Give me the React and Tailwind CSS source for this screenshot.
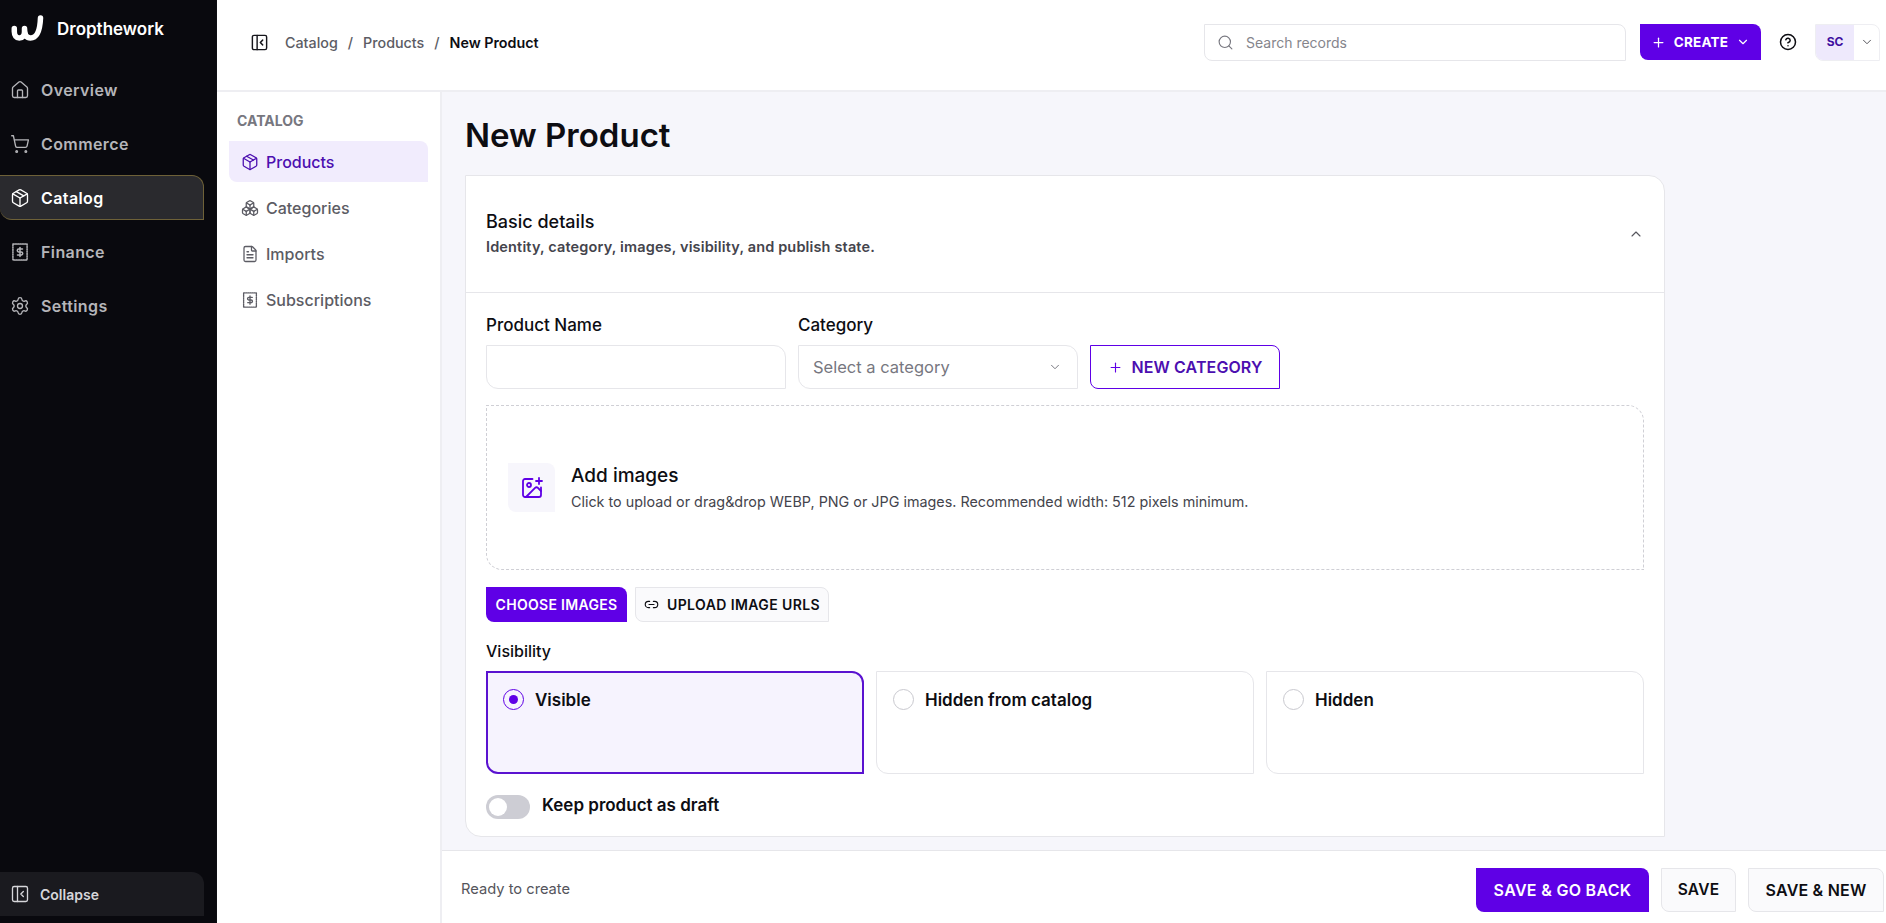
// App.jsx - New Product screen
import {
  House,
  ShoppingCart,
  Package,
  Settings,
  Boxes,
  FileText,
  PanelLeftClose,
  Search,
  Plus,
  ChevronDown,
  ChevronUp,
  CircleHelp,
  ImagePlus,
  Link2,
} from "lucide-react";

function ReceiptDollar({ className }) {
  return (
    <svg viewBox="0 0 24 24" fill="none" stroke="currentColor" strokeWidth="1.8" strokeLinecap="round" strokeLinejoin="round" className={className}>
      <path d="M3.500 2.500h17v19h-17z" strokeDasharray="1.6 1.2" />
      <path d="M15 8.500h-4.500a1.750 1.750 0 0 0 0 3.500h3a1.750 1.750 0 0 1 0 3.500H9" />
      <path d="M12 6.500v11" />
    </svg>
  );
}

function Logo() {
  return (
    <svg viewBox="0 0 32 26" className="w-[33px] h-[26px]" fill="none" stroke="#fff" strokeWidth="5.500" strokeLinecap="round" strokeLinejoin="round">
      <path d="M2.800 13.500v3c0 4 2 6.500 5 6.500 3.400 0 5.200-2.600 5.200-6.500v-3c0 6 1.600 9.500 6 9.500 6 0 9.500-7.500 10-20" />
    </svg>
  );
}

const mainNav = [
  { label: "Overview", icon: House },
  { label: "Commerce", icon: ShoppingCart },
  { label: "Catalog", icon: Package, active: true },
  { label: "Finance", icon: ReceiptDollar },
  { label: "Settings", icon: Settings },
];

const subNav = [
  { label: "Products", icon: Package, active: true },
  { label: "Categories", icon: Boxes },
  { label: "Imports", icon: FileText },
  { label: "Subscriptions", icon: ReceiptDollar },
];

function VisibilityCard({ label, checked }) {
  return (
    <div
      className={
        checked
          ? "flex-1 h-[103px] pl-[15px] pr-[16px] pt-[16px] flex items-start gap-[11px] bg-[#f6f3fe] border-2 border-[#5a12d0] rounded-tr-xl rounded-bl-xl"
          : "flex-1 h-[103px] pl-[16px] pr-[17px] pt-[17px] flex items-start gap-[11px] bg-white border border-[#e6e6ea] rounded-tr-xl rounded-bl-xl"
      }
    >
      <span
        className={
          checked
            ? "w-[21px] h-[21px] rounded-full border border-[#5f00e6] flex items-center justify-center shrink-0"
            : "w-[21px] h-[21px] rounded-full border border-[#c9c9cf] shrink-0"
        }
      >
        {checked && <span className="w-[9px] h-[9px] rounded-full bg-[#5f00e6]" />}
      </span>
      <span className="text-[17px] leading-[22px] font-semibold text-[#0d0d12]">{label}</span>
    </div>
  );
}

export default function App() {
  return (
    <div className="h-screen flex overflow-hidden bg-white text-[#0d0d12] font-['Inter',sans-serif]">
      {/* main sidebar */}
      <aside className="w-[217px] shrink-0 bg-[#09090e] flex flex-col border-r border-[#0d0d12]">
        <div className="h-[58px] pl-[11px] pt-[15px] flex items-start gap-[13px]">
          <Logo />
          <span className="text-white text-[17px] leading-[28px] font-semibold">Dropthework</span>
        </div>
        <nav className="mt-[9px] pr-[12px] flex flex-col gap-[9px]">
          {mainNav.map((item) => (
            <div
              key={item.label}
              className={
                item.active
                  ? "h-[45px] pl-[10px] flex items-center gap-[11px] bg-[#2a2a2e] border border-l-0 border-[#6e6138] rounded-tr-xl rounded-bl-xl text-white"
                  : "h-[45px] pl-[10px] flex items-center gap-[11px] text-[#b5b5b9]"
              }
            >
              <item.icon className="w-[20px] h-[20px]" strokeWidth={1.6} />
              <span className="text-[16px] font-semibold tracking-[0.4px]">{item.label}</span>
            </div>
          ))}
        </nav>
        <div className="mt-auto mb-[7px] mr-[12px] h-[44px] pl-[10px] flex items-center gap-[10px] bg-[#1a1a1f] rounded-tr-xl text-[#d6d6da]">
          <PanelLeftClose className="w-[20px] h-[20px]" strokeWidth={1.6} />
          <span className="text-[14px] pt-[1px] font-semibold">Collapse</span>
        </div>
      </aside>

      <div className="flex-1 min-w-0 flex flex-col">
        {/* top bar */}
        <header className="h-[92px] shrink-0 flex items-center pl-[33px] pr-[6px] pb-[6px] border-b-2 border-[#eeeef2]">
          <PanelLeftClose className="w-[19px] h-[19px] text-[#16161c]" strokeWidth={1.8} />
          <div className="ml-[16px] pt-[1px] flex items-center gap-[10px] text-[14.300px] font-medium text-[#5c5c64]">
            <span>Catalog</span>
            <span>/</span>
            <span>Products</span>
            <span>/</span>
            <span className="font-semibold text-[#0d0d12]">New Product</span>
          </div>
          <div className="ml-auto w-[422px] h-[37px] pl-[12px] flex items-center gap-[12px] border border-[#e6e6ea] rounded-tr-lg rounded-bl-lg">
            <Search className="w-[17px] h-[17px] text-[#77777f]" strokeWidth={1.6} />
            <span className="text-[14px] text-[#85858c]">Search records</span>
          </div>
          <button className="ml-[14px] w-[121px] h-[36px] flex items-center justify-center gap-[8px] bg-[#5f00e6] text-white text-[13.500px] font-bold tracking-[0.2px] rounded-tr-lg rounded-bl-lg">
            <Plus className="w-[15px] h-[15px]" strokeWidth={2} />
            CREATE
            <ChevronDown className="w-[14px] h-[14px]" strokeWidth={2} />
          </button>
          <CircleHelp className="ml-[18px] w-[18px] h-[18px] text-[#0d0d12]" strokeWidth={2} />
          <div className="ml-[18px] w-[65px] h-[37px] flex border border-[#eeeef2] rounded-tr-lg rounded-bl-lg overflow-hidden">
            <span className="w-[38px] flex items-center justify-center bg-[#eee9fc] text-[#3f10a0] text-[12px] font-bold">SC</span>
            <span className="flex-1 flex items-center justify-center text-[#55555c]">
              <ChevronDown className="w-[14px] h-[14px]" strokeWidth={1.7} />
            </span>
          </div>
        </header>

        <div className="flex-1 min-h-0 flex">
          {/* section nav */}
          <aside className="w-[225px] shrink-0 pl-[12px] pr-[12px] border-r-2 border-[#eeeef2]">
            <div className="mt-[18px] pl-[8px] text-[14px] font-bold text-[#77777f]">CATALOG</div>
            <nav className="mt-[10px] flex flex-col gap-[5px]">
              {subNav.map((item) => (
                <div
                  key={item.label}
                  className={
                    item.active
                      ? "h-[41px] pl-[12px] flex items-center gap-[7px] bg-[#f1ecfd] rounded-tr-lg rounded-bl-lg text-[#4c0fb0]"
                      : "h-[41px] pl-[12px] flex items-center gap-[7px] text-[#5c5c64]"
                  }
                >
                  <item.icon className="w-[18px] h-[18px]" strokeWidth={1.7} />
                  <span className="text-[16px] font-medium">{item.label}</span>
                </div>
              ))}
            </nav>
          </aside>

          <div className="flex-1 min-w-0 flex flex-col bg-[#f6f6fb]">
            <main className="flex-1 min-h-0 pl-[23px] pt-[21px]">
              <h1 className="text-[33px] leading-[44px] font-semibold text-[#0d0d12]">New Product</h1>
              <section className="mt-[18px] w-[1200px] h-[662px] bg-white border border-[#e6e6ea] rounded-tr-2xl rounded-bl-2xl">
                <div className="h-[117px] pl-[20px] pr-[20px] flex items-center justify-between border-b border-[#e6e6ea]">
                  <div className="pb-[2px]">
                    <div className="text-[18px] leading-[26px] font-medium">Basic details</div>
                    <div className="mt-[2px] text-[14.500px] leading-[20px] font-semibold tracking-[0.15px] text-[#44444c]">
                      Identity, category, images, visibility, and publish state.
                    </div>
                  </div>
                  <ChevronUp className="w-[16px] h-[16px] text-[#55555c]" strokeWidth={1.7} />
                </div>

                <div className="px-[20px] pt-[21px]">
                  <div className="flex items-end gap-[12px]">
                    <div className="w-[300px]">
                      <div className="text-[17px] leading-[22px] font-medium">Product Name</div>
                      <div className="mt-[9px] h-[44px] border border-[#e6e6ea] rounded-tr-xl rounded-bl-xl" />
                    </div>
                    <div className="w-[280px]">
                      <div className="text-[17px] leading-[22px] font-medium">Category</div>
                      <div className="mt-[9px] h-[44px] pl-[14px] pr-[15px] flex items-center justify-between border border-[#e6e6ea] rounded-tr-xl rounded-bl-xl">
                        <span className="text-[16.500px] text-[#77777f]">Select a category</span>
                        <ChevronDown className="w-[14px] h-[14px] text-[#77777f]" strokeWidth={1.7} />
                      </div>
                    </div>
                    <button className="w-[190px] h-[44px] flex items-center justify-center gap-[9px] border border-[#5f00e6] rounded-tr-lg rounded-bl-lg text-[#4c0fb0] text-[16px] font-semibold tracking-[0.1px]">
                      <Plus className="w-[15px] h-[15px] text-[#5f00e6]" strokeWidth={1.8} />
                      NEW CATEGORY
                    </button>
                  </div>

                  <div className="mt-[16px] h-[165px] pl-[21px] flex items-center gap-[16px] border border-dashed border-[#cfcfd5] rounded-tr-2xl rounded-bl-2xl">
                    <div className="w-[47px] h-[49px] flex items-center justify-center bg-[#f7f6fc] rounded-tr-lg rounded-bl-lg">
                      <ImagePlus className="w-[24px] h-[24px] text-[#5f00e6]" strokeWidth={1.8} />
                    </div>
                    <div>
                      <div className="text-[19px] leading-[26px] font-medium">Add images</div>
                      <div className="mt-[3px] text-[14.350px] leading-[20px] text-[#44444c]">
                        Click to upload or drag&amp;drop WEBP, PNG or JPG images. Recommended width: 512 pixels minimum.
                      </div>
                    </div>
                  </div>

                  <div className="mt-[17px] flex gap-[8px]">
                    <button className="w-[141px] h-[35px] bg-[#5f00e6] text-white text-[14px] font-semibold tracking-[0.3px] rounded-tr-lg rounded-bl-lg">
                      CHOOSE IMAGES
                    </button>
                    <button className="w-[194px] h-[35px] flex items-center justify-center gap-[8px] bg-[#fafafc] border border-[#e6e6ea] text-[14px] font-semibold tracking-[0.4px] rounded-tr-lg rounded-bl-lg">
                      <Link2 className="w-[15px] h-[15px]" strokeWidth={1.8} />
                      UPLOAD IMAGE URLS
                    </button>
                  </div>

                  <div className="mt-[18px] text-[16px] leading-[22px] font-medium">Visibility</div>
                  <div className="mt-[9px] flex gap-[12px]">
                    <VisibilityCard label="Visible" checked />
                    <VisibilityCard label="Hidden from catalog" />
                    <VisibilityCard label="Hidden" />
                  </div>

                  <div className="mt-[19px] flex items-center gap-[12px]">
                    <div className="w-[44px] h-[24px] p-[3px] flex bg-[#cdcdd4] rounded-full">
                      <span className="w-[18px] h-[18px] rounded-full bg-white" />
                    </div>
                    <span className="pb-[2px] text-[17px] font-semibold">Keep product as draft</span>
                  </div>
                </div>
              </section>
            </main>

            <footer className="h-[73px] shrink-0 pl-[19px] pr-[2px] pt-[5px] flex items-center justify-between bg-white border-t border-[#e6e6ea]">
              <span className="text-[14.700px] text-[#55555c]">Ready to create</span>
              <div className="flex gap-[12px]">
                <button className="w-[173px] h-[44px] bg-[#5f00e6] text-white text-[16px] font-semibold tracking-[0.3px] rounded-tr-lg rounded-bl-lg">
                  SAVE &amp; GO BACK
                </button>
                <button className="w-[75px] h-[44px] bg-[#fafafc] border border-[#e6e6ea] text-[15.500px] font-semibold tracking-[0.2px] rounded-tr-lg rounded-bl-lg">
                  SAVE
                </button>
                <button className="w-[136px] h-[44px] bg-[#fafafc] border border-[#e6e6ea] text-[16px] font-semibold tracking-[0.2px] rounded-tr-lg rounded-bl-lg">
                  SAVE &amp; NEW
                </button>
              </div>
            </footer>
          </div>
        </div>
      </div>
    </div>
  );
}
